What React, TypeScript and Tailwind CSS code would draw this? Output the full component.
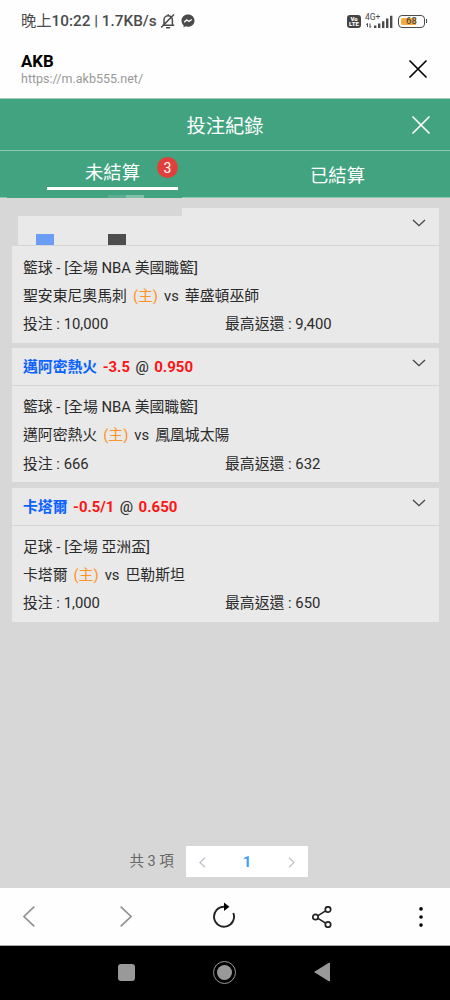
import React from 'react';

interface Bet {
  id: number;
  pick?: string;
  handicap?: string;
  odds?: string;
  league: string;
  home: string;
  away: string;
  stake: string;
  payout: string;
}

const bets: Bet[] = [
  { id: 1, league: '籃球 - [全場 NBA 美國職籃]', home: '聖安東尼奧馬刺', away: '華盛頓巫師', stake: '10,000', payout: '9,400' },
  { id: 2, pick: '邁阿密熱火', handicap: '-3.5', odds: '0.950', league: '籃球 - [全場 NBA 美國職籃]', home: '邁阿密熱火', away: '鳳凰城太陽', stake: '666', payout: '632' },
  { id: 3, pick: '卡塔爾', handicap: '-0.5/1', odds: '0.650', league: '足球 - [全場 亞洲盃]', home: '卡塔爾', away: '巴勒斯坦', stake: '1,000', payout: '650' },
];

const CloseIcon: React.FC<{ className: string; strokeWidth: number }> = ({ className, strokeWidth }) => (
  <svg viewBox="0 0 18 18" className={className} fill="none" stroke="currentColor" strokeWidth={strokeWidth} strokeLinecap="round">
    <path d="M1 1 17 17M17 1 1 17" />
  </svg>
);

const StatusBar: React.FC = () => (
  <div className="flex h-[41px] items-center pt-px pr-[23px] pl-[21px] text-[#4b4b4b]">
    <span className="text-[15.3px] font-medium whitespace-nowrap">
      <span className="font-normal">晚上</span>10:22 | 1.7KB/s
    </span>
    <svg viewBox="0 0 16 16" className="ml-[3px] h-4 w-4" fill="none" stroke="currentColor" strokeWidth="1.5">
      <path d="M2.2 12.3h12M4 12V7a4.200 4.200 0 0 1 8.400 0v5M6 14.700h4.200M8.200 1.200v1.800M1.200 14.400 14 1.500" />
    </svg>
    <svg viewBox="0 0 14 14" className="ml-[5px] h-[14px] w-[14px]">
      <path d="M7 .6C3.200.6.500 3.300.500 6.700c0 1.900.8 3.500 2.100 4.600v2.100l2-1.100c.8.200 1.500.4 2.400.4 3.800 0 6.500-2.600 6.500-6S10.800.6 7 .6Z" fill="currentColor" />
      <path d="m3.200 8.300 2.500-2.500 2.300 1.700 2.700-2" fill="none" stroke="#fff" strokeWidth="1.400" />
    </svg>
    <div className="ml-auto flex items-center">
      <div className="flex h-[13px] w-[14px] flex-col items-center justify-center rounded-[3px] bg-[#444] text-[6px] leading-[5.5px] font-black text-white">
        <span>Vo</span>
        <span>LTE</span>
      </div>
      <div className="relative ml-1 h-[15px] w-[29px]">
        <span className="absolute top-[-1px] left-0 text-[8.5px] leading-[8px]">4G+</span>
        <svg viewBox="0 0 29 15" className="h-full w-full" fill="currentColor">
          <path d="M9 11.500h2.400V14H9zM13 9.500h2.400V14H13zM17 7.200h2.400V14H17zM21 4.500h2.400V14H21zM25 1.700h2.400V14H25z" />
          <path d="M2.500 9.500v3.500M5 9.500v4M1.300 10.700 2.500 9.300M6.200 12.300 5 13.700" fill="none" stroke="currentColor" />
        </svg>
      </div>
      <div className="relative ml-[4px] flex h-[13px] w-[27px] items-center rounded-[4px] border-[1.500px] border-[#4b4b4b] p-[2px]">
        <div className="h-full w-[15px] rounded-l-[2px] bg-[#f7ab38]" />
        <span className="absolute inset-0 flex items-center justify-center text-[9.500px] leading-none font-medium">68</span>
      </div>
      <div className="ml-px h-1 w-px bg-[#4b4b4b]" />
    </div>
  </div>
);

const BrowserHeader: React.FC = () => (
  <header className="flex h-[58px] items-center justify-between border-b border-[#9fd0bf] pr-[23px] pl-[21px]">
    <div className="pb-px">
      <h1 className="text-[16.800px] leading-[19px] font-bold text-black">AKB</h1>
      <p className="text-[12.500px] leading-[16px] text-[#999]">https://m.akb555.net/</p>
    </div>
    <CloseIcon className="mt-[-1px] h-[18px] w-[18px] text-black" strokeWidth={1.700} />
  </header>
);

const Tabs: React.FC = () => (
  <div className="relative grid h-[47px] grid-cols-2 border-b border-[#8fc7b3] text-[18.300px]">
    <div className="relative flex justify-center pt-[10px] leading-6">
      未結算
      <span className="absolute top-[6px] left-[157px] flex h-[21px] w-[21px] items-center justify-center rounded-full bg-[#df403b] text-[14px] leading-none">3</span>
      <span className="absolute top-[36px] left-[47px] h-[3px] w-[131px] bg-white" />
    </div>
    <div className="flex justify-center pt-[13px] leading-6">已結算</div>
    {/* leftover strip under the active tab */}
    <div className="absolute top-[44px] left-[7px] flex h-[3px] w-[175px] bg-[#42a381]">
      <span className="ml-[101px] w-[18px] bg-[#5bae91]" />
      <span className="w-[18px] bg-[#80c1aa]" />
    </div>
  </div>
);

const BetCard: React.FC<{ bet: Bet }> = ({ bet }) => (
  <article className="bg-[#e9e9e9] text-[14.850px]">
    <div className="relative flex h-[38px] items-center border-b border-[#d5d5d5] pt-[2px] pl-[11px] font-bold">
      {bet.pick ? (
        <div className="flex gap-[5.500px] whitespace-nowrap">
          <span className="text-[#0a62ff]">{bet.pick}</span>
          <span className="text-[#fb1515]">{bet.handicap}</span>
          <span className="font-medium text-[#333]">@</span>
          <span className="text-[15px] text-[#fb1515]">{bet.odds}</span>
        </div>
      ) : (
        <>
          {/* masked selection */}
          <div className="absolute top-0 left-0 h-2 w-[170px] bg-[#d7d7d7]" />
          <div className="absolute top-0 left-0 h-[38px] w-[6px] bg-[#d7d7d7]" />
          <div className="absolute bottom-0 left-[24px] h-[11px] w-[18px] bg-[#6b9df5]" />
          <div className="absolute bottom-0 left-[96px] h-[11px] w-[18px] bg-[#4d4d4d]" />
        </>
      )}
      <svg viewBox="0 0 14 8" className="absolute top-[11px] right-[13px] h-2 w-[14px]" fill="none" stroke="#444" strokeWidth="1.300">
        <path d="m1 1 6 5.700L13 1" />
      </svg>
    </div>
    <div className="flex h-[96.600px] flex-col pt-[7.600px] pl-[11px] leading-[28.100px] whitespace-nowrap text-[#2b2b2b]">
      <div>{bet.league}</div>
      <div className="flex gap-[6px]">
        <span>{bet.home}</span>
        <span className="text-[#ff9326]">(主)</span>
        <span>vs</span>
        <span>{bet.away}</span>
      </div>
      <div className="flex">
        <span className="w-[202px]">投注 : {bet.stake}</span>
        <span>最高返還 : {bet.payout}</span>
      </div>
    </div>
  </article>
);

const Pagination: React.FC = () => (
  <div className="mt-auto flex h-[31px] items-center pl-[117.500px]">
    <span className="w-[56.500px] pt-px text-[14.500px] whitespace-nowrap text-[#666]">共 3 項</span>
    <div className="flex h-[31px] w-[122px] items-center justify-between bg-white px-[13px] pt-px text-[15px] font-bold text-[#409eff]">
      <svg viewBox="0 0 7 11" className="h-[11px] w-[7px]" fill="none" stroke="#c0c4cc" strokeWidth="1.300">
        <path d="M6 .8 1 5.500l5 4.700" />
      </svg>
      <span>1</span>
      <svg viewBox="0 0 7 11" className="h-[11px] w-[7px]" fill="none" stroke="#c0c4cc" strokeWidth="1.300">
        <path d="m1 .8 5 4.700-5 4.700" />
      </svg>
    </div>
  </div>
);

const BrowserToolbar: React.FC = () => (
  <div className="flex h-[58px] items-center border-b border-[#aaa] pl-[23px] text-[#222]">
    <svg viewBox="0 0 12 21" className="h-[21px] w-3" fill="none" stroke="#929292" strokeWidth="1.700">
      <path d="M11.300.7 1 10.500l10.300 9.800" />
    </svg>
    <svg viewBox="0 0 12 21" className="ml-[85px] h-[21px] w-3" fill="none" stroke="#929292" strokeWidth="1.700">
      <path d="M.7.7 11 10.500.7 20.300" />
    </svg>
    <svg viewBox="0 0 24 26" className="mb-[3px] ml-[80px] h-[26px] w-6">
      <path d="M12 4.700A10 10 0 1 0 21.300 11" fill="none" stroke="currentColor" strokeWidth="1.900" />
      <path d="M12 .500v8.400l5.400-4.200z" fill="#000" />
    </svg>
    <svg viewBox="0 0 20 22" className="ml-[76px] h-[22px] w-5" fill="none" stroke="currentColor" strokeWidth="1.700">
      <circle cx="3.500" cy="11" r="2.700" />
      <circle cx="16" cy="3.500" r="2.700" />
      <circle cx="16" cy="18.500" r="2.700" />
      <path d="m6 9.600 7.600-4.700M6 12.400l7.600 4.700" />
    </svg>
    <svg viewBox="0 0 4 20" className="ml-[87px] h-5 w-1 fill-black">
      <circle cx="2" cy="1.900" r="1.800" />
      <circle cx="2" cy="10" r="1.800" />
      <circle cx="2" cy="18.100" r="1.800" />
    </svg>
  </div>
);

const SystemNav: React.FC = () => (
  <nav className="flex h-[54px] items-center bg-black pb-[2px] pl-[118px]">
    <div className="h-[17px] w-[17px] rounded-[3px] bg-[#999]" />
    <div className="ml-[78px] flex h-[23px] w-[23px] items-center justify-center rounded-full border-[1.500px] border-[#999]">
      <div className="h-[15px] w-[15px] rounded-full bg-[#999]" />
    </div>
    <svg viewBox="0 0 16 20" className="ml-[78px] h-5 w-4 fill-[#999]">
      <path d="M14.800.8Q16 .3 16 1.500v17q0 1.200-1.200.7L.8 10.500q-.8-.5 0-1z" />
    </svg>
  </nav>
);

const App: React.FC = () => (
  <div className="flex h-[1000px] w-[450px] flex-col overflow-hidden bg-[#fefefe] font-[Roboto,'Noto_Sans_CJK_TC',sans-serif]">
    <StatusBar />
    <BrowserHeader />
    <div className="bg-[#42a381] text-white">
      <div className="relative flex h-[52px] items-center justify-center border-b border-[#8fc7b3] pt-[5px] text-[19.300px]">
        投注紀錄
        <CloseIcon className="absolute top-[17px] right-[20px] h-[18px] w-[18px]" strokeWidth={1.700} />
      </div>
      <Tabs />
    </div>
    <main className="flex flex-1 flex-col bg-[#d7d7d7] px-[12px] pt-[10px] pb-[11px]">
      <div className="mr-[-1px] flex flex-col gap-[5.200px]">
        {bets.map((bet) => (
          <BetCard key={bet.id} bet={bet} />
        ))}
      </div>
      <Pagination />
    </main>
    <BrowserToolbar />
    <SystemNav />
  </div>
);

export default App;
